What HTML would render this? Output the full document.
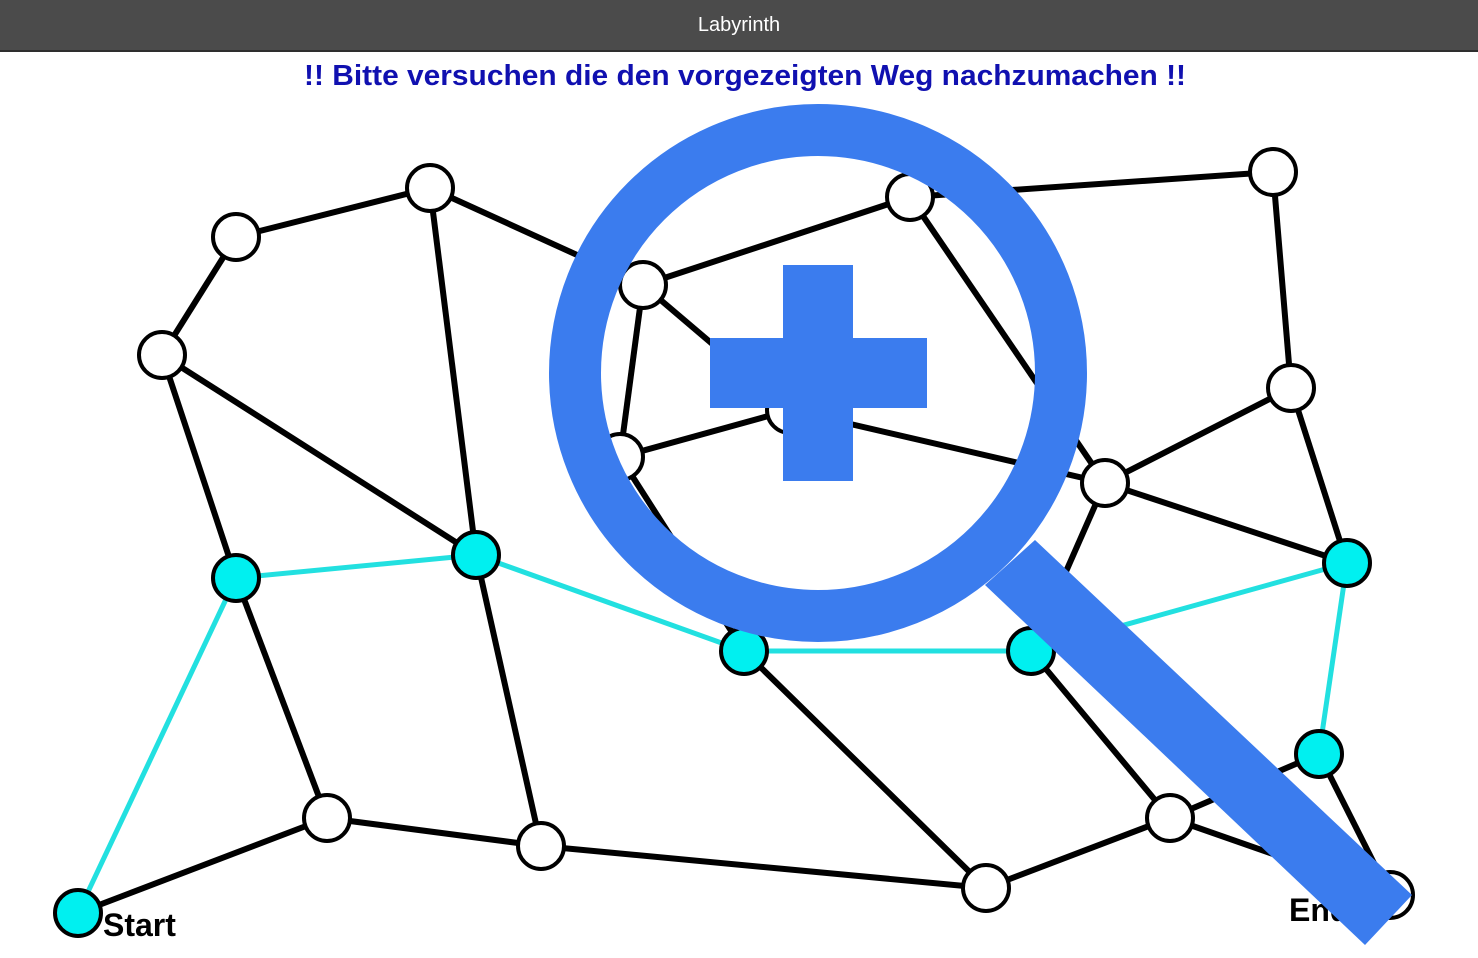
<!DOCTYPE html>
<html><head><meta charset="utf-8"><style>
html,body{margin:0;padding:0;width:1478px;height:958px;overflow:hidden;background:#fff}
.bar{position:absolute;left:0;top:0;width:1478px;height:50px;background:#4b4b4b;border-bottom:2px solid #2e2e2e;color:#fff;font:20px "Liberation Sans",sans-serif;text-align:center;line-height:50px}
svg{position:absolute;left:0;top:0}
</style></head><body>
<div class="bar">Labyrinth</div>
<svg width="1478" height="958">
<text x="304" y="85" textLength="882" lengthAdjust="spacingAndGlyphs" font-family="Liberation Sans, sans-serif" font-weight="bold" font-size="29" fill="#1010b0">!! Bitte versuchen die den vorgezeigten Weg nachzumachen !!</text>
<g stroke="#000" stroke-width="6" fill="none">
<line x1="236" y1="237" x2="430" y2="188"/><line x1="236" y1="237" x2="162" y2="355"/>
<line x1="430" y1="188" x2="643" y2="285"/><line x1="430" y1="188" x2="476" y2="555"/>
<line x1="162" y1="355" x2="476" y2="555"/><line x1="162" y1="355" x2="236" y2="578"/>
<line x1="643" y1="285" x2="910" y2="197"/><line x1="643" y1="285" x2="620" y2="457"/>
<line x1="643" y1="285" x2="790" y2="410"/><line x1="620" y1="457" x2="790" y2="410"/>
<line x1="790" y1="410" x2="1105" y2="483"/><line x1="910" y1="197" x2="1105" y2="483"/>
<line x1="910" y1="197" x2="1273" y2="172"/><line x1="1273" y1="172" x2="1291" y2="388"/>
<line x1="1291" y1="388" x2="1105" y2="483"/><line x1="1291" y1="388" x2="1347" y2="563"/>
<line x1="1105" y1="483" x2="1347" y2="563"/><line x1="1105" y1="483" x2="1031" y2="651"/>
<line x1="620" y1="457" x2="744" y2="651"/>
<line x1="236" y1="578" x2="327" y2="818"/><line x1="476" y1="555" x2="541" y2="846"/>
<line x1="744" y1="651" x2="986" y2="888"/><line x1="1031" y1="651" x2="1170" y2="818"/>
<line x1="78" y1="913" x2="327" y2="818"/><line x1="327" y1="818" x2="541" y2="846"/>
<line x1="541" y1="846" x2="986" y2="888"/><line x1="986" y1="888" x2="1170" y2="818"/>
<line x1="1170" y1="818" x2="1319" y2="754"/><line x1="1319" y1="754" x2="1390" y2="895"/>
<line x1="1170" y1="818" x2="1390" y2="895"/>
</g>
<g stroke="#22e0e0" stroke-width="5">
<line x1="78" y1="913" x2="236" y2="578"/><line x1="236" y1="578" x2="476" y2="555"/>
<line x1="476" y1="555" x2="744" y2="651"/><line x1="744" y1="651" x2="1031" y2="651"/>
<line x1="1031" y1="651" x2="1347" y2="563"/><line x1="1347" y1="563" x2="1319" y2="754"/>
</g>
<g stroke="#000" stroke-width="4" fill="#fff">
<circle cx="236" cy="237" r="23"/><circle cx="430" cy="188" r="23"/><circle cx="162" cy="355" r="23"/>
<circle cx="643" cy="285" r="23"/><circle cx="910" cy="197" r="23"/><circle cx="1273" cy="172" r="23"/>
<circle cx="1291" cy="388" r="23"/><circle cx="1105" cy="483" r="23"/><circle cx="620" cy="457" r="23"/>
<circle cx="790" cy="410" r="23"/><circle cx="327" cy="818" r="23"/><circle cx="541" cy="846" r="23"/>
<circle cx="986" cy="888" r="23"/><circle cx="1170" cy="818" r="23"/><circle cx="1390" cy="895" r="23"/>
</g>
<g stroke="#000" stroke-width="4" fill="#00f0f0">
<circle cx="236" cy="578" r="23"/><circle cx="476" cy="555" r="23"/><circle cx="744" cy="651" r="23"/>
<circle cx="1031" cy="651" r="23"/><circle cx="1347" cy="563" r="23"/><circle cx="1319" cy="754" r="23"/>
<circle cx="78" cy="913" r="23"/>
</g>
<text x="103" y="936" font-family="Liberation Sans, sans-serif" font-weight="bold" font-size="32" fill="#000">Start</text>
<text x="1289" y="921" font-family="Liberation Sans, sans-serif" font-weight="bold" font-size="32" fill="#000">End</text>
<g fill="#3b7cee">
<circle cx="818" cy="373" r="243" fill="none" stroke="#3b7cee" stroke-width="52"/>
<polygon points="985,585 1035,540 1412,895 1365,945"/>
<rect x="783" y="265" width="70" height="216"/>
<rect x="710" y="338" width="217" height="70"/>
</g>
</svg>
</body></html>
